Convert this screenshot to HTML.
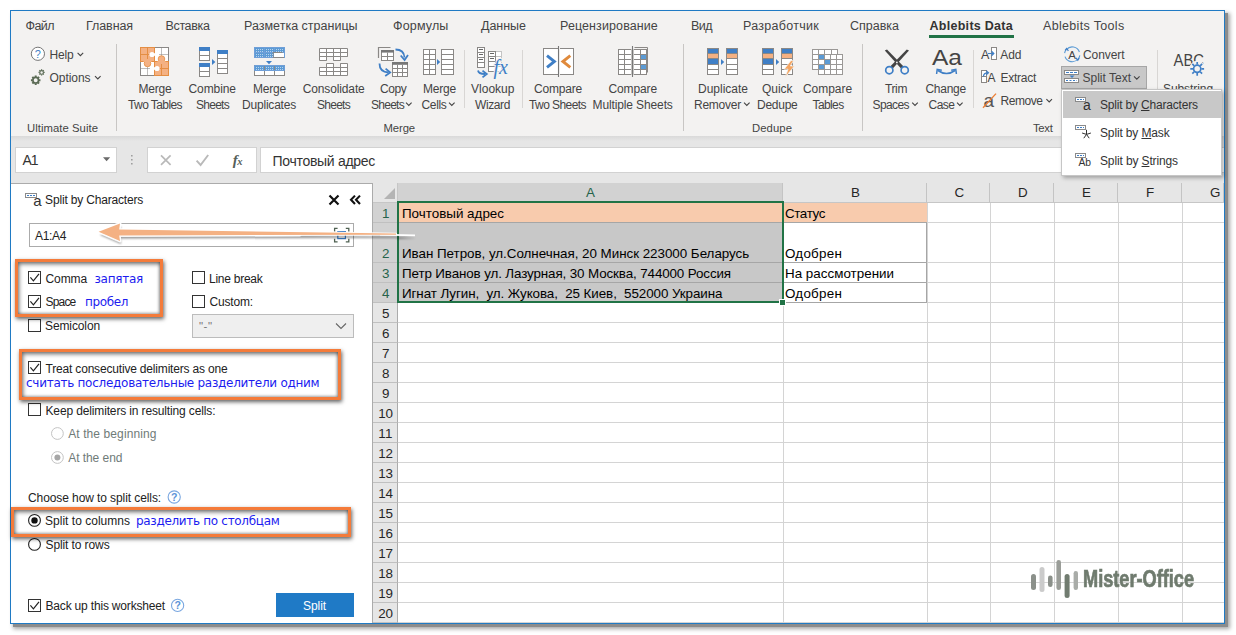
<!DOCTYPE html>
<html lang="ru">
<head>
<meta charset="utf-8">
<title>Ablebits Split by Characters</title>
<style>
html,body{margin:0;padding:0;background:#fff;}
body{width:1236px;height:635px;position:relative;overflow:hidden;font-family:"Liberation Sans",sans-serif;}
.a{position:absolute;}
.t{position:absolute;white-space:pre;line-height:1;font-family:"Liberation Sans",sans-serif;color:#3b3a39;z-index:5;}
.t.d{font-family:"DejaVu Sans",sans-serif;}
.t u{text-decoration:underline;text-underline-offset:1px;}
svg{position:absolute;overflow:visible;}
#frame{left:10px;top:10px;width:1213px;height:612px;border:1px solid #1f7ac4;background:#f3f2f1;box-shadow:3px 3px 0 0 #8c8c8c,4px 4px 4px 1px rgba(0,0,0,.35);}
#fbar{left:11px;top:136px;width:1213px;height:47px;background:#e6e6e6;}
#fbar-top{left:11px;top:136px;width:1213px;height:5px;background:linear-gradient(#d9d9d9,#e6e6e6);}
.wbox{background:#fff;border:1px solid #d2d2d2;box-sizing:border-box;}
#panel{left:11px;top:183px;width:361px;height:440px;background:#fff;border-top:1px solid #ababab;border-right:1px solid #ababab;box-sizing:content-box;height:439px;}
#sheet{left:373px;top:183px;width:851px;height:440px;background:#fff;overflow:hidden;}
.vsep{width:1px;background:#c8c6c4;}
.vsep2{width:1px;background:#d8d6d4;}
.hd{background:#e6e6e6;box-sizing:border-box;}
.cb{width:11px;height:11px;border:1px solid #333;background:#fff;}
.rad{width:11px;height:11px;border:1px solid #333;border-radius:50%;background:#fff;}
.obox{border:3px solid #f47b3a;box-sizing:border-box;box-shadow:1px 2px 4px rgba(0,0,0,.62), inset 1px 2px 4px rgba(0,0,0,.58), inset -1px -1px 3px rgba(0,0,0,.28);z-index:20;}
</style>
</head>
<body>
<div id="frame" class="a"></div>

<!-- ribbon tab underline -->
<div class="a" style="left:929px;top:35px;width:85px;height:3px;background:#217346"></div>

<!-- ribbon separators -->
<div class="a vsep" style="left:116px;top:44px;height:87px"></div>
<div class="a vsep2" style="left:464px;top:50px;height:58px"></div>
<div class="a vsep2" style="left:522px;top:50px;height:58px"></div>
<div class="a vsep" style="left:683px;top:44px;height:87px"></div>
<div class="a vsep" style="left:862px;top:44px;height:87px"></div>
<div class="a vsep2" style="left:973px;top:50px;height:58px"></div>
<div class="a vsep2" style="left:1157px;top:50px;height:58px"></div>

<!-- split text pressed button -->
<div class="a" style="left:1061px;top:66px;width:86px;height:23px;background:#c8c8c8;border:1px solid #a6a6a6;box-sizing:border-box"></div>

<svg class="a" style="left:0;top:0" width="1236" height="635" viewBox="0 0 1236 635" fill="none">
<circle cx="37.9" cy="53.8" r="6.6" fill="#fff" stroke="#767676" stroke-width="1"/>
<text x="37.9" y="57.8" font-family="Liberation Sans,sans-serif" font-size="11" fill="#3f7fc6" text-anchor="middle">?</text>
<path d="M77.6 52.8l2.8 2.8l2.8 -2.8" fill="none" stroke="#444444" stroke-width="1.1"/>
<circle cx="35.7" cy="80.2" r="2.808" fill="none" stroke="#5b6b55" stroke-width="1.7"/><path d="M38.82 80.20L40.46 80.20M37.91 82.41L39.06 83.56M35.70 83.32L35.70 84.96M33.49 82.41L32.34 83.56M32.58 80.20L30.94 80.20M33.49 77.99L32.34 76.84M35.70 77.08L35.70 75.44M37.91 77.99L39.06 76.84" fill="none" stroke="#5b6b55" stroke-width="1.95"/>
<circle cx="41.6" cy="72.4" r="1.7999999999999998" fill="none" stroke="#5b6b55" stroke-width="1.1"/><path d="M43.60 72.40L44.65 72.40M43.01 73.81L43.76 74.56M41.60 74.40L41.60 75.45M40.19 73.81L39.44 74.56M39.60 72.40L38.55 72.40M40.19 70.99L39.44 70.24M41.60 70.40L41.60 69.35M43.01 70.99L43.76 70.24" fill="none" stroke="#5b6b55" stroke-width="1.25"/>
<path d="M95 76.2l2.8 2.8l2.8 -2.8" fill="none" stroke="#444444" stroke-width="1.1"/>
<rect x="140.5" y="47.5" width="28" height="28" fill="#fff" stroke="#8a8886" stroke-width="1"/>
<rect x="140.5" y="47.5" width="14" height="14" fill="#f4b183" stroke="#e58e43" stroke-width="1"/>
<rect x="154.5" y="61.5" width="14" height="14" fill="#f4b183" stroke="#e58e43" stroke-width="1"/>
<path d="M147.5 47.5v28M161.5 47.5v28M140.5 54.5h28M140.5 68.5h28" fill="none" stroke="#8a8886" stroke-width="1" opacity=".55"/>
<path d="M147.5 47.5v14M140.5 54.5h14M161.5 61.5v14M154.5 68.5h14" fill="none" stroke="#e58e43" stroke-width="1"/>
<circle cx="147.5" cy="63.5" r="3.3" fill="#f4b183" stroke="#e58e43" stroke-width="0.8"/>
<rect x="143.5" y="59" width="8" height="3" fill="#f4b183"/>
<circle cx="161.5" cy="59" r="3.3" fill="#f4b183" stroke="#e58e43" stroke-width="0.8"/>
<rect x="157.5" y="61" width="8" height="3" fill="#f4b183"/>
<circle cx="152" cy="54.5" r="2.6" fill="#fff"/>
<rect x="152" y="53.3" width="7" height="2.4" fill="#fff"/>
<circle cx="157" cy="68.5" r="2.6" fill="#fff"/>
<rect x="150" y="67.3" width="7" height="2.4" fill="#fff"/>
<rect x="199.5" y="47.5" width="10" height="13" fill="#fff" stroke="#8a8886" stroke-width="1"/><rect x="199" y="47" width="11" height="4" fill="#3f7fc6"/><path d="M199.5 55.5H209.5" fill="none" stroke="#8a8886" stroke-width="1"/>
<rect x="199.5" y="63.5" width="10" height="13" fill="#fff" stroke="#8a8886" stroke-width="1"/><rect x="199" y="63" width="11" height="4" fill="#3f7fc6"/><path d="M199.5 71.5H209.5" fill="none" stroke="#8a8886" stroke-width="1"/>
<rect x="217.5" y="50.5" width="10" height="23" fill="#fff" stroke="#8a8886" stroke-width="1"/><rect x="217" y="50" width="11" height="4" fill="#3f7fc6"/><path d="M217.5 58.5H227.5M217.5 63.5H227.5M217.5 68.5H227.5" fill="none" stroke="#8a8886" stroke-width="1"/>
<path d="M212 59L215.4 62.0L212 65Z" fill="#3f7fc6"/>
<rect x="254.5" y="47.5" width="30" height="10" fill="#fff" stroke="#6f9fd8" stroke-width="1"/><rect x="254.5" y="47.5" width="10.0" height="5.0" fill="#5b9bd5"/><rect x="254.5" y="52.5" width="10.0" height="5.0" fill="#5b9bd5"/><rect x="264.5" y="47.5" width="10.0" height="5.0" fill="#5b9bd5"/><rect x="264.5" y="52.5" width="10.0" height="5.0" fill="#5b9bd5"/><rect x="274.5" y="47.5" width="10.0" height="5.0" fill="#5b9bd5"/><rect x="254.5" y="47.5" width="30" height="10" fill="none" stroke="#6f9fd8" stroke-width="1"/><path d="M264.5 47.5V57.5M274.5 47.5V57.5M254.5 52.5H284.5" fill="none" stroke="#6f9fd8" stroke-width="1"/>
<path d="M282.5 52.5h-9.5v5h11" fill="none" stroke="#8a8886" stroke-width="1"/>
<rect x="274" y="53" width="10" height="4" fill="#fff"/>
<path d="M266 61h6l-3 3.2Z" fill="#3f7fc6"/>
<rect x="254.5" y="65.5" width="30" height="10" fill="#fff" stroke="#8a8886" stroke-width="1"/><rect x="254.5" y="65.5" width="10.0" height="5.0" fill="#5b9bd5"/><rect x="264.5" y="65.5" width="10.0" height="5.0" fill="#5b9bd5"/><rect x="274.5" y="65.5" width="10.0" height="5.0" fill="#5b9bd5"/><rect x="254.5" y="65.5" width="30" height="10" fill="none" stroke="#8a8886" stroke-width="1"/><path d="M264.5 65.5V75.5M274.5 65.5V75.5M254.5 70.5H284.5" fill="none" stroke="#8a8886" stroke-width="1"/>
<path d="M254.5 65.5h30v5h-30Z" fill="none" stroke="#6f9fd8" stroke-width="1"/>
<path d="M256 49.5h7M256 51.5h7M256 54.5h7M256 56.5h7M256 67.5h7M256 69.5h7M266 49.5h7M266 51.5h7M266 54.5h7M266 56.5h7M266 67.5h7M266 69.5h7M276 49.5h7M276 51.5h7M276 67.5h7M276 69.5h7" fill="none" stroke="#b7d2ee" stroke-width="1" stroke-dasharray="1 1"/>
<path d="M319.5 48.5h28v8h-7v4h-7v-4h-7v4h-7Z" fill="#fff" stroke="#8a8886" stroke-width="1"/>
<path d="M319.5 52.5h28M319.5 56.5h28M326.5 48.5v12M333.5 48.5v12M340.5 48.5v8" fill="none" stroke="#8a8886" stroke-width="1"/>
<path d="M319.5 75.5h28v-12h-7v4h-7v-4h-7v4h-7Z" fill="#fff" stroke="#8a8886" stroke-width="1"/>
<path d="M319.5 71.5h28M319.5 67.5h28M326.5 75.5v-8M333.5 75.5v-12M340.5 75.5v-12" fill="none" stroke="#8a8886" stroke-width="1"/>
<path d="M378.5 58v-10.5h12" fill="none" stroke="#8a8886" stroke-width="1.2"/>
<rect x="381.5" y="50.5" width="12" height="10" fill="#fff" stroke="#8a8886" stroke-width="1"/>
<rect x="381" y="50" width="13" height="2.6" fill="#777"/>
<path d="M381.5 56.5h12M387.5 52.5v8" fill="none" stroke="#8a8886" stroke-width="1"/>
<rect x="392.5" y="62.5" width="15" height="14" fill="#fff" stroke="#8a8886" stroke-width="1"/>
<rect x="392" y="62" width="16" height="2.8" fill="#777"/>
<path d="M392.5 68.5h15M392.5 72.5h15M397.5 65v11.5M402.5 65v11.5" fill="none" stroke="#8a8886" stroke-width="1"/>
<path d="M395.5 49.5q8.5 0 9 8" fill="none" stroke="#3f7fc6" stroke-width="1.8"/>
<path d="M400.7 55.5l3.9 4.6l3.4 -5" fill="none" stroke="#3f7fc6" stroke-width="1.8"/>
<path d="M379.5 63.5q0 8.5 9 9" fill="none" stroke="#3f7fc6" stroke-width="1.8"/>
<path d="M385.6 68.6l4.6 3.9l-5 3.4" fill="none" stroke="#3f7fc6" stroke-width="1.8"/>
<rect x="423.5" y="49.5" width="12" height="25" fill="#fff" stroke="#8a8886" stroke-width="1"/><path d="M429.5 49.5V74.5M423.5 54.5H435.5M423.5 59.5H435.5M423.5 64.5H435.5M423.5 69.5H435.5" fill="none" stroke="#8a8886" stroke-width="1"/>
<rect x="441.5" y="49.5" width="12" height="25" fill="#fff" stroke="#8a8886" stroke-width="1"/><path d="M441.5 54.5H453.5M441.5 59.5H453.5M441.5 64.5H453.5M441.5 69.5H453.5" fill="none" stroke="#8a8886" stroke-width="1"/>
<path d="M437 59L440.2 62.0L437 65Z" fill="#3f7fc6"/>
<rect x="488.5" y="51.5" width="13" height="20" fill="#fff" stroke="#c4c4c4" stroke-width="1"/><path d="M494.5 51.5V71.5M488.5 56.5H501.5M488.5 61.5H501.5M488.5 66.5H501.5" fill="none" stroke="#c4c4c4" stroke-width="1"/>
<rect x="477.5" y="47.5" width="7" height="20" fill="#fff" stroke="#8a8886" stroke-width="1"/><path d="M477.5 52.5H484.5M477.5 57.5H484.5M477.5 62.5H484.5" fill="none" stroke="#8a8886" stroke-width="1"/>
<path d="M479 49.5h4M479 54.5h4M479 59.5h4" fill="none" stroke="#666" stroke-width="1"/>
<rect x="488.5" y="51.5" width="7" height="20" fill="#fff" stroke="#8a8886" stroke-width="1"/><path d="M488.5 56.5H495.5M488.5 61.5H495.5M488.5 66.5H495.5" fill="none" stroke="#8a8886" stroke-width="1"/>
<path d="M490 53.5h4M490 58.5h4" fill="none" stroke="#666" stroke-width="1"/>
<text x="493.5" y="74.4" font-family="Liberation Serif,serif" font-style="italic" font-size="20" fill="#3f7fc6" stroke="#f3f2f1" stroke-width="2" paint-order="stroke">fx</text>
<path d="M478 70.5q.5 3.5 7 3.5" fill="none" stroke="#3f7fc6" stroke-width="1.8"/>
<path d="M482.5 70.6l4.3 3.4l-4.3 3.4" fill="none" stroke="#3f7fc6" stroke-width="1.8"/>
<rect x="543.5" y="48.5" width="15" height="26" fill="#fff" stroke="#8a8886" stroke-width="1"/>
<rect x="559.5" y="48.5" width="14" height="26" fill="#fff" stroke="#8a8886" stroke-width="1"/>
<rect x="558" y="46" width="2" height="31" fill="#f3f2f1"/>
<path d="M558.5 46v31" fill="none" stroke="#777" stroke-width="1.1"/>
<path d="M547 55.6l7.4 5.9l-7.4 5.9" fill="none" stroke="#3f7fc6" stroke-width="2.9"/>
<path d="M570.3 55.6l-7.4 5.9l7.4 5.9" fill="none" stroke="#e08a3c" stroke-width="2.9"/>
<path d="M634.5 47.5h13v25" fill="none" stroke="#8a8886" stroke-width="1"/>
<rect x="618.5" y="49.5" width="13" height="25" fill="#fff" stroke="#8a8886" stroke-width="1"/><path d="M624.5 49.5V74.5M618.5 54.5H631.5M618.5 59.5H631.5M618.5 64.5H631.5M618.5 69.5H631.5" fill="none" stroke="#8a8886" stroke-width="1"/>
<rect x="633.5" y="49.5" width="13" height="25" fill="#fff" stroke="#8a8886" stroke-width="1"/><rect x="640.0" y="54.5" width="6.5" height="5.0" fill="#5b9bd5"/><rect x="640.0" y="64.5" width="6.5" height="5.0" fill="#5b9bd5"/><rect x="633.5" y="49.5" width="13" height="25" fill="none" stroke="#8a8886" stroke-width="1"/><path d="M640.5 49.5V74.5M633.5 54.5H646.5M633.5 59.5H646.5M633.5 64.5H646.5M633.5 69.5H646.5" fill="none" stroke="#8a8886" stroke-width="1"/>
<rect x="631.4" y="46" width="2.2" height="31" fill="#f3f2f1"/>
<path d="M632.5 46v31" fill="none" stroke="#777" stroke-width="1.1"/>
<rect x="707.5" y="48.5" width="11" height="26" fill="#fff" stroke="#8a8886" stroke-width="1"/><rect x="707.5" y="48.5" width="11.0" height="5.2" fill="#3f7fc6"/><rect x="707.5" y="53.7" width="11.0" height="5.2" fill="#f4b183"/><rect x="707.5" y="58.9" width="11.0" height="5.2" fill="#3f7fc6"/><rect x="707.5" y="48.5" width="11" height="26" fill="none" stroke="#8a8886" stroke-width="1"/><path d="M707.5 53.5H718.5M707.5 58.5H718.5M707.5 64.5H718.5M707.5 69.5H718.5" fill="none" stroke="#8a8886" stroke-width="1"/>
<rect x="726.5" y="48.5" width="11" height="26" fill="#fff" stroke="#8a8886" stroke-width="1"/><rect x="726.5" y="48.5" width="11.0" height="5.2" fill="#3f7fc6"/><rect x="726.5" y="53.7" width="11.0" height="5.2" fill="#f4b183"/><rect x="726.5" y="48.5" width="11" height="26" fill="none" stroke="#8a8886" stroke-width="1"/><path d="M726.5 53.5H737.5M726.5 58.5H737.5M726.5 64.5H737.5M726.5 69.5H737.5" fill="none" stroke="#8a8886" stroke-width="1"/>
<path d="M721 59L724.2 62.0L721 65Z" fill="#3f7fc6"/>
<rect x="762.5" y="48.5" width="11" height="26" fill="#fff" stroke="#8a8886" stroke-width="1"/><rect x="762.5" y="48.5" width="11.0" height="5.2" fill="#3f7fc6"/><rect x="762.5" y="53.7" width="11.0" height="5.2" fill="#f4b183"/><rect x="762.5" y="58.9" width="11.0" height="5.2" fill="#3f7fc6"/><rect x="762.5" y="48.5" width="11" height="26" fill="none" stroke="#8a8886" stroke-width="1"/><path d="M762.5 53.5H773.5M762.5 58.5H773.5M762.5 64.5H773.5M762.5 69.5H773.5" fill="none" stroke="#8a8886" stroke-width="1"/>
<rect x="781.5" y="48.5" width="11" height="26" fill="#fff" stroke="#8a8886" stroke-width="1"/><rect x="781.5" y="48.5" width="11.0" height="5.2" fill="#3f7fc6"/><rect x="781.5" y="53.7" width="11.0" height="5.2" fill="#f4b183"/><rect x="781.5" y="48.5" width="11" height="26" fill="none" stroke="#8a8886" stroke-width="1"/><path d="M781.5 53.5H792.5M781.5 58.5H792.5M781.5 64.5H792.5M781.5 69.5H792.5" fill="none" stroke="#8a8886" stroke-width="1"/>
<path d="M776 59L779.2 62.0L776 65Z" fill="#3f7fc6"/>
<path d="M791 60.4l-6.8 8.8h3.8l-3 8.4l9.4 -11.6h-4l3.2 -5.6Z" fill="#f4a460" stroke="#f3f2f1" stroke-width="0.8"/>
<rect x="812.5" y="49.5" width="25" height="20" fill="#fff" stroke="#9a9896" stroke-width="1"/><path d="M818.5 49.5V69.5M824.5 49.5V69.5M831.5 49.5V69.5M812.5 54.5H837.5M812.5 59.5H837.5M812.5 64.5H837.5" fill="none" stroke="#9a9896" stroke-width="1"/>
<rect x="818.5" y="54.5" width="24" height="20" fill="#fff" stroke="#9a9896" stroke-width="1"/><rect x="818.5" y="54.5" width="6.0" height="5.0" fill="#5b9bd5"/><rect x="824.5" y="59.5" width="6.0" height="5.0" fill="#5b9bd5"/><rect x="818.5" y="64.5" width="6.0" height="5.0" fill="#5b9bd5"/><rect x="818.5" y="54.5" width="24" height="20" fill="none" stroke="#9a9896" stroke-width="1"/><path d="M824.5 54.5V74.5M830.5 54.5V74.5M836.5 54.5V74.5M818.5 59.5H842.5M818.5 64.5H842.5M818.5 69.5H842.5" fill="none" stroke="#9a9896" stroke-width="1"/>
<path d="M884.8 50.6l2.2 -1l16.6 16.8l-2.6 2Z" fill="#444444"/>
<path d="M909 50.6l-2.2 -1l-16.6 16.8l2.6 2Z" fill="#444444"/>
<circle cx="896.9" cy="62.4" r="0.9" fill="#f3f2f1"/>
<circle cx="889.3" cy="70.2" r="3.6" fill="none" stroke="#3f7fc6" stroke-width="1.7"/>
<circle cx="904.7" cy="70.2" r="3.6" fill="none" stroke="#3f7fc6" stroke-width="1.7"/>
<text x="932" y="65.4" font-family="Liberation Sans,sans-serif" font-size="22" fill="#444444" textLength="30" lengthAdjust="spacingAndGlyphs">Aa</text>
<path d="M938 70.5q8.5 6 17 0" fill="none" stroke="#3f7fc6" stroke-width="1.7"/>
<path d="M936.6 74l.6 -4.6l4.6 .8" fill="none" stroke="#3f7fc6" stroke-width="1.5"/>
<path d="M956.4 74l-.6 -4.6l-4.6 .8" fill="none" stroke="#3f7fc6" stroke-width="1.5"/>
<text x="981" y="59.2" font-family="Liberation Sans,sans-serif" font-size="12.5" fill="#444444">A</text>
<rect x="991.5" y="47.5" width="5" height="12" fill="#fff" stroke="#8a8886" stroke-width="1"/>
<path d="M988 53.5h5.5M991.5 51.3l2.3 2.2l-2.3 2.2" fill="none" stroke="#3f7fc6" stroke-width="1.2"/>
<rect x="981.5" y="70.5" width="5" height="12" fill="#fff" stroke="#8a8886" stroke-width="1"/>
<path d="M981.5 76.5h5" fill="none" stroke="#8a8886" stroke-width="1"/>
<path d="M983.5 76.5q0 -3.5 4.5 -3.8" fill="none" stroke="#3f7fc6" stroke-width="1.3"/>
<path d="M986.2 70.6l2.3 2.1l-2.3 2.1" fill="none" stroke="#3f7fc6" stroke-width="1.2"/>
<text x="987.4" y="81.6" font-family="Liberation Sans,sans-serif" font-size="12" fill="#444444">A</text>
<text x="983.6" y="106.8" font-family="Liberation Sans,sans-serif" font-size="19" fill="#555">a</text>
<path d="M983 107.8L996 93.6" fill="none" stroke="#ed7d31" stroke-width="1.3"/>
<path d="M1046.4 99.2l2.8 2.8l2.8 -2.8" fill="none" stroke="#444444" stroke-width="1.1"/>
<text x="1072.2" y="58.6" font-family="Liberation Sans,sans-serif" font-size="11.5" fill="#444444" text-anchor="middle">A</text>
<path d="M1066.4 49.6a7.6 7.6 0 0 1 13 2.4" fill="none" stroke="#5b9bd5" stroke-width="1.1"/>
<path d="M1078 59a7.6 7.6 0 0 1 -13 -2.4" fill="none" stroke="#5b9bd5" stroke-width="1.1"/>
<path d="M1064.6 53.2a7.6 7.6 0 0 1 1.6 -3.6" fill="none" stroke="#5b9bd5" stroke-width="1.1"/>
<path d="M1079.8 55.4a7.6 7.6 0 0 1 -1.6 3.6" fill="none" stroke="#5b9bd5" stroke-width="1.1"/>
<path d="M1065.2 50.4l1.4 -2l1.8 2.4" fill="none" stroke="#3f7fc6" stroke-width="1.2"/>
<path d="M1079.2 58.2l-1.4 2l-1.8 -2.4" fill="none" stroke="#3f7fc6" stroke-width="1.2"/>
<rect x="1064.5" y="70.5" width="14" height="4" fill="#fff" stroke="#8a8886" stroke-width="1"/>
<path d="M1066 72.5h11" fill="none" stroke="#3f7fc6" stroke-width="1" stroke-dasharray="3 1"/>
<rect x="1064.5" y="78.5" width="14" height="4" fill="#fff" stroke="#8a8886" stroke-width="1"/>
<path d="M1066 80.5h11" fill="none" stroke="#3f7fc6" stroke-width="1" stroke-dasharray="2 1.5"/>
<path d="M1069.5 75.6h5l-2.5 2.4Z" fill="#3f7fc6"/>
<path d="M1134 76.4l2.8 2.8l2.8 -2.8" fill="none" stroke="#444444" stroke-width="1.1"/>
<text x="1173.6" y="66.4" font-family="Liberation Sans,sans-serif" font-size="17" fill="#444444" textLength="30.5" lengthAdjust="spacingAndGlyphs">ABC</text>
<circle cx="1197.2" cy="68.8" r="8" fill="#f3f2f1"/>
<circle cx="1197.2" cy="68.8" r="3.6" fill="none" stroke="#3f7fc6" stroke-width="1.7"/>
<path d="M1201.40 68.80L1204.10 68.80M1200.17 71.77L1202.08 73.68M1197.20 73.00L1197.20 75.70M1194.23 71.77L1192.32 73.68M1193.00 68.80L1190.30 68.80M1194.23 65.83L1192.32 63.92M1197.20 64.60L1197.20 61.90M1200.17 65.83L1202.08 63.92" fill="none" stroke="#3f7fc6" stroke-width="1.7"/>
<path d="M406 102.6l2.8 2.8l2.8 -2.8" fill="none" stroke="#444444" stroke-width="1.1"/>
<path d="M449 102.6l2.8 2.8l2.8 -2.8" fill="none" stroke="#444444" stroke-width="1.1"/>
<path d="M744 102.6l2.8 2.8l2.8 -2.8" fill="none" stroke="#444444" stroke-width="1.1"/>
<path d="M912.2 102.6l2.8 2.8l2.8 -2.8" fill="none" stroke="#444444" stroke-width="1.1"/>
<path d="M957 102.6l2.8 2.8l2.8 -2.8" fill="none" stroke="#444444" stroke-width="1.1"/>
</svg>

<!-- formula bar -->
<div id="fbar" class="a"></div>
<div id="fbar-top" class="a"></div>
<div class="a wbox" style="left:15px;top:147px;width:102px;height:26px"></div>
<div class="a wbox" style="left:147px;top:147px;width:110px;height:26px"></div>
<div class="a wbox" style="left:260px;top:147px;width:964px;height:26px;border-right:none"></div>
<svg class="a" style="left:0;top:0" width="1236" height="635" viewBox="0 0 1236 635" fill="none">
<path d="M103 157.2h7.2l-3.6 4Z" fill="#6a6a6a"/>
<path d="M131 155h1.6v1.6h-1.6ZM131 159h1.6v1.6h-1.6ZM131 163h1.6v1.6h-1.6Z" fill="#9e9e9e"/>
<path d="M161 155.4l9.6 9.4M170.6 155.4l-9.6 9.4" fill="none" stroke="#b9b9b9" stroke-width="1.7"/>
<path d="M196.6 160.6l4 4.4l7.6 -10" fill="none" stroke="#b9b9b9" stroke-width="1.9"/>
<text x="232.8" y="164.6" font-family="Liberation Serif,serif" font-style="italic" font-weight="700" font-size="15" fill="#55605a">f<tspan font-size="10.5" dx="-.6">x</tspan></text>
</svg>

<!-- task pane -->
<div id="panel" class="a"></div>
<div class="a" style="left:29px;top:223px;width:325px;height:24px;border:1px solid #ababab;box-sizing:border-box;background:#fff"></div>
<div class="a" style="left:192px;top:314px;width:162px;height:24px;border:1px solid #bcbcbc;box-sizing:border-box;background:#efefef"></div>
<div class="a" style="left:276px;top:593px;width:78px;height:24px;background:#1f7ac6"></div>
<svg class="a" style="left:0;top:0" width="1236" height="635" viewBox="0 0 1236 635" fill="none">
<rect x="25.5" y="193.5" width="11" height="4" fill="#fff" stroke="#8a8a8a" stroke-width="1"/><path d="M27 195.5h8" fill="none" stroke="#3f7fc6" stroke-width="1" stroke-dasharray="2 1"/>
<text x="33.2" y="205.6" font-family="Liberation Sans,sans-serif" font-size="15" fill="#333">a</text>
<path d="M329.5 195.5l9 9M338.5 195.5l-9 9" fill="none" stroke="#111" stroke-width="2.2"/>
<path d="M355 195.6l-4 4.2l4 4.2M360 195.6l-4 4.2l4 4.2" fill="none" stroke="#111" stroke-width="2.1"/>
<rect x="337.8" y="231.6" width="7.6" height="7" fill="#fff" stroke="#3f7fc6" stroke-width="1.2"/>
<path d="M334.6 231.4v-3h3M345.8 228.4h3v3M348.8 238.8v3h-3M337.6 241.8h-3v-3" fill="none" stroke="#4f6152" stroke-width="1.3"/>
<rect x="28.5" y="271.5" width="12" height="12" fill="#fff" stroke="#333" stroke-width="1"/><path d="M30.4 277.4l3 3.4l5.6 -7" fill="none" stroke="#222" stroke-width="1.2"/>
<rect x="28.5" y="295.5" width="12" height="12" fill="#fff" stroke="#333" stroke-width="1"/><path d="M30.4 301.4l3 3.4l5.6 -7" fill="none" stroke="#222" stroke-width="1.2"/>
<rect x="28.5" y="319.5" width="12" height="12" fill="#fff" stroke="#333" stroke-width="1"/>
<rect x="192.5" y="271.5" width="12" height="12" fill="#fff" stroke="#333" stroke-width="1"/>
<rect x="192.5" y="295.5" width="12" height="12" fill="#fff" stroke="#333" stroke-width="1"/>
<rect x="28.5" y="361.5" width="12" height="12" fill="#fff" stroke="#333" stroke-width="1"/><path d="M30.4 367.4l3 3.4l5.6 -7" fill="none" stroke="#222" stroke-width="1.2"/>
<rect x="28.5" y="403.5" width="12" height="12" fill="#fff" stroke="#333" stroke-width="1"/>
<rect x="28.5" y="599.5" width="12" height="12" fill="#fff" stroke="#333" stroke-width="1"/><path d="M30.4 605.4l3 3.4l5.6 -7" fill="none" stroke="#222" stroke-width="1.2"/>
<path d="M336 323.5l5 5l5 -5" fill="none" stroke="#666" stroke-width="1.1"/>
<circle cx="57.4" cy="433.5" r="5.9" fill="#fff" stroke="#c4c4c4" stroke-width="1"/>
<circle cx="57.4" cy="457.5" r="5.9" fill="#fff" stroke="#c4c4c4" stroke-width="1"/>
<circle cx="57.4" cy="457.5" r="3" fill="#a6a6a6"/>
<circle cx="34.5" cy="520.4" r="5.9" fill="#fff" stroke="#222" stroke-width="1.1"/>
<circle cx="34.5" cy="520.4" r="3.2" fill="#111"/>
<circle cx="34.5" cy="544.4" r="5.9" fill="#fff" stroke="#222" stroke-width="1.1"/>
<circle cx="174.2" cy="497" r="6.1" fill="#fff" stroke="#7aa7e0" stroke-width="1.1"/>
<text x="174.2" y="500.8" font-family="Liberation Sans,sans-serif" font-size="10.5" font-weight="700" fill="#5b93d8" text-anchor="middle">?</text>
<circle cx="177.6" cy="605.4" r="6.1" fill="#fff" stroke="#7aa7e0" stroke-width="1.1"/>
<text x="177.6" y="609.1999999999999" font-family="Liberation Sans,sans-serif" font-size="10.5" font-weight="700" fill="#5b93d8" text-anchor="middle">?</text>
</svg>

<!-- sheet -->
<div id="sheet" class="a">
<div class="a" style="left:410px;top:20px;width:1px;height:420px;background:#d4d4d4"></div>
<div class="a" style="left:554px;top:20px;width:1px;height:420px;background:#d4d4d4"></div>
<div class="a" style="left:617px;top:20px;width:1px;height:420px;background:#d4d4d4"></div>
<div class="a" style="left:681px;top:20px;width:1px;height:420px;background:#d4d4d4"></div>
<div class="a" style="left:745px;top:20px;width:1px;height:420px;background:#d4d4d4"></div>
<div class="a" style="left:809px;top:20px;width:1px;height:420px;background:#d4d4d4"></div>
<div class="a" style="left:851px;top:20px;width:1px;height:420px;background:#d4d4d4"></div>
<div class="a" style="left:25px;top:39px;width:826px;height:1px;background:#d4d4d4"></div>
<div class="a" style="left:25px;top:79px;width:826px;height:1px;background:#d4d4d4"></div>
<div class="a" style="left:25px;top:99px;width:826px;height:1px;background:#d4d4d4"></div>
<div class="a" style="left:25px;top:119px;width:826px;height:1px;background:#d4d4d4"></div>
<div class="a" style="left:25px;top:139px;width:826px;height:1px;background:#d4d4d4"></div>
<div class="a" style="left:25px;top:159px;width:826px;height:1px;background:#d4d4d4"></div>
<div class="a" style="left:25px;top:179px;width:826px;height:1px;background:#d4d4d4"></div>
<div class="a" style="left:25px;top:199px;width:826px;height:1px;background:#d4d4d4"></div>
<div class="a" style="left:25px;top:219px;width:826px;height:1px;background:#d4d4d4"></div>
<div class="a" style="left:25px;top:239px;width:826px;height:1px;background:#d4d4d4"></div>
<div class="a" style="left:25px;top:259px;width:826px;height:1px;background:#d4d4d4"></div>
<div class="a" style="left:25px;top:279px;width:826px;height:1px;background:#d4d4d4"></div>
<div class="a" style="left:25px;top:299px;width:826px;height:1px;background:#d4d4d4"></div>
<div class="a" style="left:25px;top:319px;width:826px;height:1px;background:#d4d4d4"></div>
<div class="a" style="left:25px;top:339px;width:826px;height:1px;background:#d4d4d4"></div>
<div class="a" style="left:25px;top:359px;width:826px;height:1px;background:#d4d4d4"></div>
<div class="a" style="left:25px;top:379px;width:826px;height:1px;background:#d4d4d4"></div>
<div class="a" style="left:25px;top:399px;width:826px;height:1px;background:#d4d4d4"></div>
<div class="a" style="left:25px;top:419px;width:826px;height:1px;background:#d4d4d4"></div>
<div class="a" style="left:25px;top:439px;width:826px;height:1px;background:#d4d4d4"></div>
<div class="a" style="left:0px;top:0px;width:25px;height:20px;background:#e6e6e6;border-right:1px solid #c6c6c6;border-bottom:1px solid #c6c6c6;box-sizing:border-box"></div>
<svg style="left:11px;top:5px" width="12" height="12"><path d="M11 0V11H0Z" fill="#b4b4b4"/></svg>
<div class="a" style="left:25px;top:0px;width:385px;height:20px;background:#d2d2d2;border-right:1px solid #c4c4c4;border-bottom:1px solid #217346;box-sizing:border-box"></div>
<div class="a" style="left:410px;top:0px;width:144px;height:20px;background:#e6e6e6;border-right:1px solid #c4c4c4;border-bottom:1px solid #c6c6c6;box-sizing:border-box"></div>
<div class="a" style="left:554px;top:0px;width:63px;height:20px;background:#e6e6e6;border-right:1px solid #c4c4c4;border-bottom:1px solid #c6c6c6;box-sizing:border-box"></div>
<div class="a" style="left:617px;top:0px;width:64px;height:20px;background:#e6e6e6;border-right:1px solid #c4c4c4;border-bottom:1px solid #c6c6c6;box-sizing:border-box"></div>
<div class="a" style="left:681px;top:0px;width:64px;height:20px;background:#e6e6e6;border-right:1px solid #c4c4c4;border-bottom:1px solid #c6c6c6;box-sizing:border-box"></div>
<div class="a" style="left:745px;top:0px;width:64px;height:20px;background:#e6e6e6;border-right:1px solid #c4c4c4;border-bottom:1px solid #c6c6c6;box-sizing:border-box"></div>
<div class="a" style="left:809px;top:0px;width:42px;height:20px;background:#e6e6e6;border-right:1px solid #c4c4c4;border-bottom:1px solid #c6c6c6;box-sizing:border-box"></div>
<div class="a" style="left:0px;top:20px;width:25px;height:20px;background:#d2d2d2;border-bottom:1px solid #c0c0c0;border-right:1px solid #217346;box-sizing:border-box"></div>
<div class="a" style="left:0px;top:40px;width:25px;height:40px;background:#d2d2d2;border-bottom:1px solid #c0c0c0;border-right:1px solid #217346;box-sizing:border-box"></div>
<div class="a" style="left:0px;top:80px;width:25px;height:20px;background:#d2d2d2;border-bottom:1px solid #c0c0c0;border-right:1px solid #217346;box-sizing:border-box"></div>
<div class="a" style="left:0px;top:100px;width:25px;height:20px;background:#d2d2d2;border-bottom:1px solid #c0c0c0;border-right:1px solid #217346;box-sizing:border-box"></div>
<div class="a" style="left:0px;top:120px;width:25px;height:20px;background:#e6e6e6;border-bottom:1px solid #c0c0c0;border-right:1px solid #ababab;box-sizing:border-box"></div>
<div class="a" style="left:0px;top:140px;width:25px;height:20px;background:#e6e6e6;border-bottom:1px solid #c0c0c0;border-right:1px solid #ababab;box-sizing:border-box"></div>
<div class="a" style="left:0px;top:160px;width:25px;height:20px;background:#e6e6e6;border-bottom:1px solid #c0c0c0;border-right:1px solid #ababab;box-sizing:border-box"></div>
<div class="a" style="left:0px;top:180px;width:25px;height:20px;background:#e6e6e6;border-bottom:1px solid #c0c0c0;border-right:1px solid #ababab;box-sizing:border-box"></div>
<div class="a" style="left:0px;top:200px;width:25px;height:20px;background:#e6e6e6;border-bottom:1px solid #c0c0c0;border-right:1px solid #ababab;box-sizing:border-box"></div>
<div class="a" style="left:0px;top:220px;width:25px;height:20px;background:#e6e6e6;border-bottom:1px solid #c0c0c0;border-right:1px solid #ababab;box-sizing:border-box"></div>
<div class="a" style="left:0px;top:240px;width:25px;height:20px;background:#e6e6e6;border-bottom:1px solid #c0c0c0;border-right:1px solid #ababab;box-sizing:border-box"></div>
<div class="a" style="left:0px;top:260px;width:25px;height:20px;background:#e6e6e6;border-bottom:1px solid #c0c0c0;border-right:1px solid #ababab;box-sizing:border-box"></div>
<div class="a" style="left:0px;top:280px;width:25px;height:20px;background:#e6e6e6;border-bottom:1px solid #c0c0c0;border-right:1px solid #ababab;box-sizing:border-box"></div>
<div class="a" style="left:0px;top:300px;width:25px;height:20px;background:#e6e6e6;border-bottom:1px solid #c0c0c0;border-right:1px solid #ababab;box-sizing:border-box"></div>
<div class="a" style="left:0px;top:320px;width:25px;height:20px;background:#e6e6e6;border-bottom:1px solid #c0c0c0;border-right:1px solid #ababab;box-sizing:border-box"></div>
<div class="a" style="left:0px;top:340px;width:25px;height:20px;background:#e6e6e6;border-bottom:1px solid #c0c0c0;border-right:1px solid #ababab;box-sizing:border-box"></div>
<div class="a" style="left:0px;top:360px;width:25px;height:20px;background:#e6e6e6;border-bottom:1px solid #c0c0c0;border-right:1px solid #ababab;box-sizing:border-box"></div>
<div class="a" style="left:0px;top:380px;width:25px;height:20px;background:#e6e6e6;border-bottom:1px solid #c0c0c0;border-right:1px solid #ababab;box-sizing:border-box"></div>
<div class="a" style="left:0px;top:400px;width:25px;height:20px;background:#e6e6e6;border-bottom:1px solid #c0c0c0;border-right:1px solid #ababab;box-sizing:border-box"></div>
<div class="a" style="left:0px;top:420px;width:25px;height:20px;background:#e6e6e6;border-bottom:1px solid #c0c0c0;border-right:1px solid #ababab;box-sizing:border-box"></div>
<div class="a" style="left:25px;top:20px;width:529px;height:19px;background:#f8cbad"></div>
<div class="a" style="left:25px;top:40px;width:385px;height:79px;background:#c8c8c8"></div>
<div class="a" style="left:25px;top:39px;width:529px;height:1px;background:#a6a6a6"></div>
<div class="a" style="left:25px;top:79px;width:529px;height:1px;background:#a6a6a6"></div>
<div class="a" style="left:25px;top:99px;width:529px;height:1px;background:#a6a6a6"></div>
<div class="a" style="left:25px;top:119px;width:529px;height:1px;background:#a6a6a6"></div>
<div class="a" style="left:553px;top:40px;width:1px;height:80px;background:#a6a6a6"></div>
<div class="a" style="left:24px;top:18px;width:387px;height:102px;border:2px solid #217346;box-sizing:border-box"></div>
<div class="a" style="left:406px;top:116px;width:6px;height:6px;background:#217346;border:1px solid #fff;box-sizing:content-box;width:5px;height:5px"></div>
</div>

<!-- dropdown menu -->
<div class="a" style="left:1061px;top:89px;width:161px;height:87px;background:#fff;border:1px solid #c6c6c6;box-sizing:border-box;box-shadow:2px 2px 4px rgba(0,0,0,.3);z-index:30"></div>
<div class="a" style="left:1063px;top:91px;width:158px;height:27px;background:#c8c8c8;z-index:30"></div>
<svg class="a" style="left:0;top:0;z-index:31" width="1236" height="635" viewBox="0 0 1236 635" fill="none">
<rect x="1075.5" y="97.5" width="10" height="4" fill="#fff" stroke="#8a8a8a" stroke-width="1"/>
<path d="M1077 99.5h7" fill="none" stroke="#3f7fc6" stroke-width="1" stroke-dasharray="2 1"/>
<rect x="1075.5" y="125.5" width="10" height="4" fill="#fff" stroke="#8a8a8a" stroke-width="1"/>
<path d="M1077 127.5h7" fill="none" stroke="#3f7fc6" stroke-width="1" stroke-dasharray="2 1"/>
<rect x="1075.5" y="153.5" width="10" height="4" fill="#fff" stroke="#8a8a8a" stroke-width="1"/>
<path d="M1077 155.5h7" fill="none" stroke="#3f7fc6" stroke-width="1" stroke-dasharray="2 1"/>
<text x="1083" y="110.4" font-family="Liberation Sans,sans-serif" font-size="14" fill="#333">a</text>
<path d="M1086.5 134.4v-4.6M1086.5 134.4l4.4 -1.4M1086.5 134.4l2.7 3.8M1086.5 134.4l-2.7 3.8M1086.5 134.4l-4.4 -1.4" fill="none" stroke="#333" stroke-width="1"/>
<text x="1078.4" y="166" font-family="Liberation Sans,sans-serif" font-size="10.5" fill="#333" textLength="12.6" lengthAdjust="spacingAndGlyphs">Ab</text>
</svg>

<!-- annotations -->
<div class="a obox" style="left:15px;top:259px;width:148px;height:58px"></div>
<div class="a obox" style="left:19px;top:349px;width:322px;height:51px"></div>
<div class="a obox" style="left:11px;top:507px;width:340px;height:30px"></div>
<svg class="a" style="left:0;top:0;z-index:22" width="1236" height="635" viewBox="0 0 1236 635" fill="none">
<defs><filter id="ash" x="-5%" y="-60%" width="110%" height="240%"><feGaussianBlur stdDeviation="1.3"/></filter></defs>
<path d="M98.6 231.8L120 223.4L119.2 229.5L396 233.5L396 234.7L119.2 235.5L120 241ZM396 234.1L415 235.1L396 236Z" fill="#000" opacity=".42" transform="translate(1.2,3)" filter="url(#ash)"/>
<path d="M380 234.6L415 235.4" fill="none" stroke="#fff" stroke-width="1.6"/>
<path d="M98.6 231.8L120 223.4L119.2 229.5L300 232.1L300 235L119.2 235.5L120 241Z" fill="#fff" stroke="#fff" stroke-width="3" stroke-linejoin="round" opacity=".9"/>
<path d="M98.6 231.8L120 223.4L119.2 229.5L396 233.5L396 234.7L119.2 235.5L120 241Z" fill="#f4b183" stroke="#fff" stroke-width="1.7" stroke-linejoin="round" paint-order="stroke"/>
</svg>

<!-- watermark logo -->
<svg class="a" style="left:0;top:0;z-index:6" width="1236" height="635" viewBox="0 0 1236 635">
<rect x="1031" y="574" width="5" height="16" rx="2.5" fill="#8b908a"/>
<rect x="1039.5" y="567" width="5" height="25" rx="2.5" fill="#cbcbcb"/>
<rect x="1048" y="575.5" width="4.6" height="11.5" rx="2.3" fill="#8b908a"/>
<rect x="1056.4" y="560" width="4.6" height="30" rx="2.3" fill="#9a9d98"/>
<rect x="1064.6" y="574" width="5" height="24" rx="2.5" fill="#717c70"/>
<rect x="1073.6" y="571" width="4.4" height="19" rx="2.2" fill="#a9aca8"/>
</svg>
<span class="t" style="left:1082.5px;top:567.8px;font-size:23px;font-weight:700;color:#6f7b6e;transform:scaleX(.79);transform-origin:0 0;z-index:6;-webkit-text-stroke:.7px #6f7b6e">Mister-Office</span>
<span class="t" style="left:25.5px;top:19.7px;font-size:12.5px;letter-spacing:-0.56px;color:#444444;">Файл</span>
<span class="t" style="left:86.0px;top:19.7px;font-size:12.5px;letter-spacing:-0.08px;color:#444444;">Главная</span>
<span class="t" style="left:165.5px;top:19.7px;font-size:12.5px;letter-spacing:-0.35px;color:#444444;">Вставка</span>
<span class="t" style="left:244.0px;top:19.7px;font-size:12.5px;letter-spacing:0.01px;color:#444444;">Разметка страницы</span>
<span class="t" style="left:393.0px;top:19.7px;font-size:12.5px;letter-spacing:0.16px;color:#444444;">Формулы</span>
<span class="t" style="left:481.0px;top:19.7px;font-size:12.5px;letter-spacing:-0.03px;color:#444444;">Данные</span>
<span class="t" style="left:560.0px;top:19.7px;font-size:12.5px;letter-spacing:0.10px;color:#444444;">Рецензирование</span>
<span class="t" style="left:691.0px;top:19.7px;font-size:12.5px;letter-spacing:-0.54px;color:#444444;">Вид</span>
<span class="t" style="left:743.0px;top:19.7px;font-size:12.5px;letter-spacing:0.28px;color:#444444;">Разработчик</span>
<span class="t" style="left:850.0px;top:19.7px;font-size:12.5px;letter-spacing:-0.01px;color:#444444;">Справка</span>
<span class="t" style="left:1043.0px;top:19.7px;font-size:12.5px;letter-spacing:0.33px;color:#444444;">Ablebits Tools</span>
<span class="t" style="left:929.5px;top:19.7px;font-size:12.5px;letter-spacing:0.28px;color:#333;font-weight:700;">Ablebits Data</span>
<span class="t" style="left:138.5px;top:83.3px;font-size:12px;letter-spacing:-0.20px;color:#444444;">Merge</span>
<span class="t" style="left:128.0px;top:98.8px;font-size:12px;letter-spacing:-0.58px;color:#444444;">Two Tables</span>
<span class="t" style="left:188.5px;top:83.3px;font-size:12px;letter-spacing:-0.08px;color:#444444;">Combine</span>
<span class="t" style="left:196.0px;top:98.8px;font-size:12px;letter-spacing:-0.73px;color:#444444;">Sheets</span>
<span class="t" style="left:253.0px;top:83.3px;font-size:12px;letter-spacing:-0.20px;color:#444444;">Merge</span>
<span class="t" style="left:242.0px;top:98.8px;font-size:12px;letter-spacing:-0.20px;color:#444444;">Duplicates</span>
<span class="t" style="left:302.7px;top:83.3px;font-size:12px;letter-spacing:-0.13px;color:#444444;">Consolidate</span>
<span class="t" style="left:317.0px;top:98.8px;font-size:12px;letter-spacing:-0.73px;color:#444444;">Sheets</span>
<span class="t" style="left:380.0px;top:83.3px;font-size:12px;letter-spacing:-0.38px;color:#444444;">Copy</span>
<span class="t" style="left:371.0px;top:98.8px;font-size:12px;letter-spacing:-0.73px;color:#444444;">Sheets</span>
<span class="t" style="left:423.0px;top:83.3px;font-size:12px;letter-spacing:-0.20px;color:#444444;">Merge</span>
<span class="t" style="left:421.5px;top:98.8px;font-size:12px;letter-spacing:-0.33px;color:#444444;">Cells</span>
<span class="t" style="left:471.0px;top:83.3px;font-size:12px;letter-spacing:0.02px;color:#444444;">Vlookup</span>
<span class="t" style="left:475.0px;top:98.8px;font-size:12px;letter-spacing:-0.39px;color:#444444;">Wizard</span>
<span class="t" style="left:534.0px;top:83.3px;font-size:12px;letter-spacing:-0.19px;color:#444444;">Compare</span>
<span class="t" style="left:529.0px;top:98.8px;font-size:12px;letter-spacing:-0.57px;color:#444444;">Two Sheets</span>
<span class="t" style="left:608.4px;top:83.3px;font-size:12px;letter-spacing:-0.11px;color:#444444;">Compare</span>
<span class="t" style="left:592.5px;top:98.8px;font-size:12px;letter-spacing:-0.12px;color:#444444;">Multiple Sheets</span>
<span class="t" style="left:698.0px;top:83.3px;font-size:12px;color:#444444;">Duplicate</span>
<span class="t" style="left:694.0px;top:98.8px;font-size:12px;letter-spacing:-0.24px;color:#444444;">Remover</span>
<span class="t" style="left:762.0px;top:83.3px;font-size:12px;letter-spacing:-0.04px;color:#444444;">Quick</span>
<span class="t" style="left:757.0px;top:98.8px;font-size:12px;letter-spacing:-0.26px;color:#444444;">Dedupe</span>
<span class="t" style="left:803.0px;top:83.3px;font-size:12px;letter-spacing:-0.05px;color:#444444;">Compare</span>
<span class="t" style="left:812.5px;top:98.8px;font-size:12px;letter-spacing:-0.61px;color:#444444;">Tables</span>
<span class="t" style="left:885.0px;top:83.3px;font-size:12px;letter-spacing:-0.39px;color:#444444;">Trim</span>
<span class="t" style="left:872.5px;top:98.8px;font-size:12px;letter-spacing:-0.59px;color:#444444;">Spaces</span>
<span class="t" style="left:925.4px;top:83.3px;font-size:12px;letter-spacing:-0.24px;color:#444444;">Change</span>
<span class="t" style="left:928.5px;top:98.8px;font-size:12px;letter-spacing:-0.50px;color:#444444;">Case</span>
<span class="t" style="left:49.5px;top:49.4px;font-size:12px;letter-spacing:-0.20px;color:#444444;">Help</span>
<span class="t" style="left:49.5px;top:72.1px;font-size:12px;letter-spacing:-0.04px;color:#444444;">Options</span>
<span class="t" style="left:1000.2px;top:49.4px;font-size:12px;letter-spacing:-0.02px;color:#444444;">Add</span>
<span class="t" style="left:1000.4px;top:72.1px;font-size:12px;letter-spacing:-0.25px;color:#444444;">Extract</span>
<span class="t" style="left:1000.5px;top:95.0px;font-size:12px;letter-spacing:-0.43px;color:#444444;">Remove</span>
<span class="t" style="left:1083.0px;top:49.4px;font-size:12px;letter-spacing:-0.08px;color:#444444;">Convert</span>
<span class="t" style="left:1082.5px;top:72.1px;font-size:12px;color:#444444;">Split Text</span>
<span class="t" style="left:1163.0px;top:83.3px;font-size:12px;letter-spacing:-0.08px;color:#444444;">Substring</span>
<span class="t" style="left:27.0px;top:122.7px;font-size:11.3px;letter-spacing:0.05px;color:#444444;">Ultimate Suite</span>
<span class="t" style="left:383.5px;top:122.7px;font-size:11.3px;letter-spacing:-0.11px;color:#444444;">Merge</span>
<span class="t" style="left:752.0px;top:122.7px;font-size:11.3px;letter-spacing:0.07px;color:#444444;">Dedupe</span>
<span class="t" style="left:1033.0px;top:122.7px;font-size:11.3px;letter-spacing:-0.30px;color:#444444;">Text</span>
<span class="t" style="left:1100.0px;top:98.9px;font-size:12px;letter-spacing:-0.19px;color:#333;z-index:31;">Split by <u>C</u>haracters</span>
<span class="t" style="left:1100.0px;top:126.9px;font-size:12px;letter-spacing:-0.14px;color:#333;z-index:31;">Split by <u>M</u>ask</span>
<span class="t" style="left:1100.0px;top:155.1px;font-size:12px;letter-spacing:-0.13px;color:#333;z-index:31;">Split by <u>S</u>trings</span>
<span class="t" style="left:22.5px;top:152.9px;font-size:14px;letter-spacing:-1.06px;color:#333;">A1</span>
<span class="t" style="left:272.5px;top:153.9px;font-size:14px;letter-spacing:-0.29px;color:#333;">Почтовый адрес</span>
<span class="t" style="left:45.1px;top:194.4px;font-size:12px;letter-spacing:-0.18px;color:#222222;">Split by Characters</span>
<span class="t" style="left:35.0px;top:230.1px;font-size:12px;letter-spacing:-0.34px;color:#222222;">A1:A4</span>
<span class="t" style="left:45.5px;top:272.6px;font-size:12px;letter-spacing:-0.10px;color:#222222;">Comma</span>
<span class="t d" style="left:94.5px;top:272.6px;font-size:12px;letter-spacing:-0.27px;color:#1c1cf0;z-index:25;">запятая</span>
<span class="t" style="left:45.5px;top:296.1px;font-size:12px;letter-spacing:-0.81px;color:#222222;">Space</span>
<span class="t d" style="left:85.0px;top:296.1px;font-size:12px;letter-spacing:-0.38px;color:#1c1cf0;z-index:25;">пробел</span>
<span class="t" style="left:45.0px;top:320.1px;font-size:12px;letter-spacing:-0.11px;color:#222222;">Semicolon</span>
<span class="t" style="left:209.0px;top:272.6px;font-size:12px;letter-spacing:-0.25px;color:#222222;">Line break</span>
<span class="t" style="left:209.5px;top:296.1px;font-size:12px;letter-spacing:-0.17px;color:#222222;">Custom:</span>
<span class="t" style="left:199.0px;top:320.6px;font-size:11.5px;letter-spacing:0.53px;color:#777;">&quot;-&quot;</span>
<span class="t" style="left:45.5px;top:362.6px;font-size:12px;letter-spacing:-0.18px;color:#222222;">Treat consecutive delimiters as one</span>
<span class="t d" style="left:26.0px;top:376.6px;font-size:12px;letter-spacing:-0.27px;color:#1c1cf0;z-index:25;">считать последовательные разделители одним</span>
<span class="t" style="left:45.5px;top:404.6px;font-size:12px;letter-spacing:-0.14px;color:#222222;">Keep delimiters in resulting cells:</span>
<span class="t" style="left:68.2px;top:428.3px;font-size:12px;letter-spacing:0.10px;color:#6f7b78;">At the beginning</span>
<span class="t" style="left:68.2px;top:452.4px;font-size:12px;letter-spacing:-0.05px;color:#6f7b78;">At the end</span>
<span class="t" style="left:28.0px;top:491.6px;font-size:12px;letter-spacing:-0.09px;color:#222222;">Choose how to split cells:</span>
<span class="t" style="left:45.0px;top:514.6px;font-size:12px;letter-spacing:0.02px;color:#222222;">Split to columns</span>
<span class="t d" style="left:136.0px;top:514.6px;font-size:12px;letter-spacing:-0.31px;color:#1c1cf0;z-index:25;">разделить по столбцам</span>
<span class="t" style="left:45.5px;top:538.6px;font-size:12px;letter-spacing:-0.10px;color:#222222;">Split to rows</span>
<span class="t" style="left:45.5px;top:599.6px;font-size:12px;letter-spacing:-0.18px;color:#222222;">Back up this worksheet</span>
<span class="t" style="left:303.0px;top:599.6px;font-size:12px;letter-spacing:-0.07px;color:#fff;">Split</span>
<span class="t" style="left:586.0px;top:186.0px;font-size:13.4px;letter-spacing:0.06px;color:#26634b;">A</span>
<span class="t" style="left:851.0px;top:186.0px;font-size:13.4px;letter-spacing:-0.94px;color:#262626;">B</span>
<span class="t" style="left:954.5px;top:186.0px;font-size:13.4px;letter-spacing:-1.67px;color:#262626;">C</span>
<span class="t" style="left:1018.0px;top:186.0px;font-size:13.4px;letter-spacing:-1.67px;color:#262626;">D</span>
<span class="t" style="left:1082.0px;top:186.0px;font-size:13.4px;letter-spacing:-0.94px;color:#262626;">E</span>
<span class="t" style="left:1146.0px;top:186.0px;font-size:13.4px;letter-spacing:-0.19px;color:#262626;">F</span>
<span class="t" style="left:1210.0px;top:186.0px;font-size:13.4px;letter-spacing:-1.42px;color:#262626;">G</span>
<span class="t" style="left:381.9px;top:207.0px;font-size:13.4px;letter-spacing:-0.25px;color:#26634b;">1</span>
<span class="t" style="left:381.9px;top:247.0px;font-size:13.4px;letter-spacing:-0.25px;color:#26634b;">2</span>
<span class="t" style="left:381.9px;top:267.0px;font-size:13.4px;letter-spacing:-0.25px;color:#26634b;">3</span>
<span class="t" style="left:381.9px;top:287.0px;font-size:13.4px;letter-spacing:-0.25px;color:#26634b;">4</span>
<span class="t" style="left:381.9px;top:307.0px;font-size:13.4px;letter-spacing:-0.25px;color:#262626;">5</span>
<span class="t" style="left:381.9px;top:327.0px;font-size:13.4px;letter-spacing:-0.25px;color:#262626;">6</span>
<span class="t" style="left:381.9px;top:347.0px;font-size:13.4px;letter-spacing:-0.25px;color:#262626;">7</span>
<span class="t" style="left:381.9px;top:367.0px;font-size:13.4px;letter-spacing:-0.25px;color:#262626;">8</span>
<span class="t" style="left:381.9px;top:387.0px;font-size:13.4px;letter-spacing:-0.25px;color:#262626;">9</span>
<span class="t" style="left:378.3px;top:407.0px;font-size:13.4px;letter-spacing:-0.25px;color:#262626;">10</span>
<span class="t" style="left:378.3px;top:427.0px;font-size:13.4px;letter-spacing:0.25px;color:#262626;">11</span>
<span class="t" style="left:378.3px;top:447.0px;font-size:13.4px;letter-spacing:-0.25px;color:#262626;">12</span>
<span class="t" style="left:378.3px;top:467.0px;font-size:13.4px;letter-spacing:-0.25px;color:#262626;">13</span>
<span class="t" style="left:378.3px;top:487.0px;font-size:13.4px;letter-spacing:-0.25px;color:#262626;">14</span>
<span class="t" style="left:378.3px;top:507.0px;font-size:13.4px;letter-spacing:-0.25px;color:#262626;">15</span>
<span class="t" style="left:378.3px;top:527.0px;font-size:13.4px;letter-spacing:-0.25px;color:#262626;">16</span>
<span class="t" style="left:378.3px;top:547.0px;font-size:13.4px;letter-spacing:-0.25px;color:#262626;">17</span>
<span class="t" style="left:378.3px;top:567.0px;font-size:13.4px;letter-spacing:-0.25px;color:#262626;">18</span>
<span class="t" style="left:378.3px;top:587.0px;font-size:13.4px;letter-spacing:-0.25px;color:#262626;">19</span>
<span class="t" style="left:378.3px;top:607.0px;font-size:13.4px;letter-spacing:-0.25px;color:#262626;">20</span>
<span class="t" style="left:402.0px;top:207.0px;font-size:13.4px;color:#000000;">Почтовый адрес</span>
<span class="t" style="left:402.0px;top:247.0px;font-size:13.4px;letter-spacing:-0.03px;color:#000000;">Иван Петров, ул.Солнечная, 20 Минск 223000 Беларусь</span>
<span class="t" style="left:402.0px;top:267.0px;font-size:13.4px;letter-spacing:-0.12px;color:#000000;">Петр Иванов ул. Лазурная, 30 Москва, 744000 Россия</span>
<span class="t" style="left:402.0px;top:287.0px;font-size:13.4px;letter-spacing:-0.07px;color:#000000;">Игнат Лугин,  ул. Жукова,  25 Киев,  552000 Украина</span>
<span class="t" style="left:785.0px;top:207.0px;font-size:13.4px;letter-spacing:-0.39px;color:#000000;">Статус</span>
<span class="t" style="left:785.0px;top:247.0px;font-size:13.4px;letter-spacing:0.24px;color:#000000;">Одобрен</span>
<span class="t" style="left:785.0px;top:267.0px;font-size:13.4px;letter-spacing:0.01px;color:#000000;">На рассмотрении</span>
<span class="t" style="left:785.0px;top:287.0px;font-size:13.4px;letter-spacing:0.24px;color:#000000;">Одобрен</span>
</body>
</html>
